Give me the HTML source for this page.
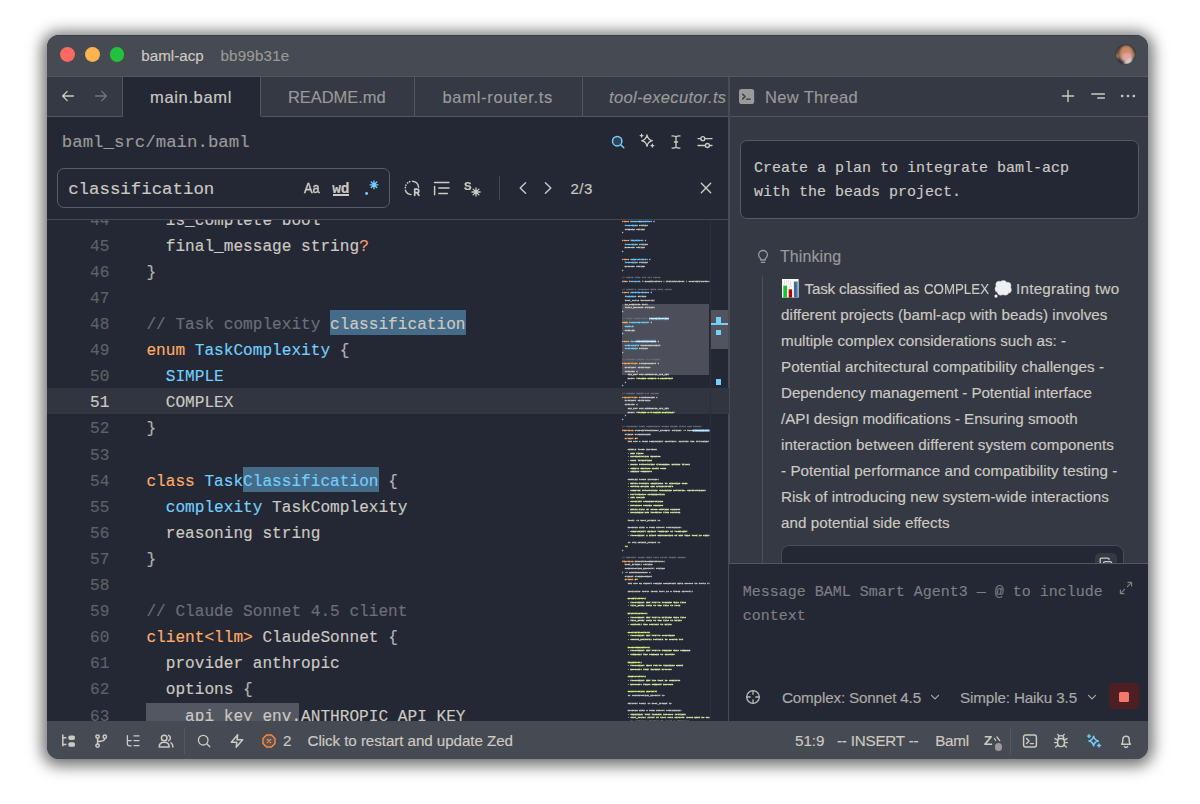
<!DOCTYPE html>
<html lang="en">
<head>
<meta charset="utf-8">
<title>baml-acp — main.baml</title>
<style>
html,body{margin:0;padding:0;background:#fff;}
body{width:1200px;height:804px;overflow:hidden;position:relative;font-family:"Liberation Sans",sans-serif;}
#shadow{position:absolute;left:46.5px;top:34.7px;width:1101.5px;height:724.5px;border-radius:12px;
  box-shadow:0 2px 15px 5px rgba(0,0,0,.56);}
#win{position:absolute;left:46.5px;top:34.7px;width:1101.5px;height:724.5px;border-radius:12px;overflow:hidden;background:#242835;}
#pg{position:absolute;left:-46.5px;top:-34.7px;width:1200px;height:804px;}
.b{position:absolute;}
.t{position:absolute;white-space:pre;line-height:20px;-webkit-text-stroke:.15px;}
.ic{position:absolute;overflow:visible;fill:none;stroke:#cccac2;stroke-width:1.3;stroke-linecap:round;stroke-linejoin:round;}
.mu{stroke:#9a9a98;}
.ac{stroke:#72cffe;}
.k{color:#ffad65}.ty{color:#72cffe}.cm{color:#6a6f79}.op{color:#f29e74}.pu{color:#b4b3ae}.s{color:#d4fe7f}.fn{color:#cccac2}.s2{color:#d9eba6}.hl{background:#4f86ad;color:#e8f4fb}
#mm{position:absolute;left:622px;top:220px;width:88px;height:501px;overflow:hidden;}
#mmi{position:absolute;left:0;top:0;transform-origin:0 0;transform:scale(.2368);font-family:"Liberation Mono",monospace;font-size:10px;line-height:15.75px;white-space:pre;color:#cccac2;font-weight:700;width:369px;overflow:hidden;-webkit-text-stroke:1.35px;}
</style>
</head>
<body>
<div id="shadow"></div>
<div id="win"><div id="pg">

<div class="b" style="left:46px;top:34px;width:1104px;height:43px;background:#464a52;"></div>
<div class="b" style="left:46px;top:35px;width:1104px;height:1px;background:#3a3e4a;"></div>
<div class="b" style="left:46px;top:76px;width:1104px;height:1px;background:#53565d;"></div>
<div class="b" style="left:46px;top:77px;width:1104px;height:39px;background:#353944;"></div>
<div class="b" style="left:46px;top:116px;width:1104px;height:1px;background:#53565d;"></div>
<div class="b" style="left:123px;top:77px;width:138px;height:40px;background:#242835;"></div>
<div class="b" style="left:122.2px;top:77px;width:1px;height:39px;background:#53565d;"></div>
<div class="b" style="left:260px;top:77px;width:1px;height:39px;background:#53565d;"></div>
<div class="b" style="left:414.3px;top:77px;width:1px;height:39px;background:#53565d;"></div>
<div class="b" style="left:581.5px;top:77px;width:1px;height:39px;background:#53565d;"></div>
<div class="b" style="left:729px;top:117px;width:421px;height:446px;background:#353944;"></div>
<div class="b" style="left:728.4px;top:77px;width:2px;height:644px;background:#474b56;"></div>
<div class="b" style="left:46px;top:219px;width:683px;height:1px;background:#454853;"></div>
<div class="b" style="left:46px;top:721px;width:1104px;height:40px;background:#464a52;"></div>
<div class="b" style="left:59.8px;top:47.1px;width:14.800px;height:14.800px;border-radius:50%;background:#fb6a62;"></div>
<div class="b" style="left:84.8px;top:47.1px;width:14.800px;height:14.800px;border-radius:50%;background:#fcb24f;"></div>
<div class="b" style="left:109.6px;top:47.1px;width:14.800px;height:14.800px;border-radius:50%;background:#23c23c;"></div>
<svg class="b" style="left:1114.6px;top:44.4px" width="21" height="21" viewBox="0 0 21 21"><defs><clipPath id="avc"><circle cx="10.500" cy="10.500" r="10.300"/></clipPath><filter id="avb" x="-30%" y="-30%" width="160%" height="160%"><feGaussianBlur stdDeviation="0.900"/></filter></defs><g clip-path="url(#avc)"><rect width="21" height="21" fill="#30343f"/><g filter="url(#avb)"><rect x="-1" y="4" width="7" height="11" fill="#46503f"/><path d="M3 5 8 1.500 15 1.800 19.500 6 19 8 3 8z" fill="#6e2a30"/><ellipse cx="11.400" cy="10" rx="6.900" ry="8.400" fill="#c98a64"/><ellipse cx="12.200" cy="13.400" rx="5.200" ry="4.400" fill="#e0a6a2"/><path d="M13 15.800 17.800 13.800 16.500 18.500 12 20.800 8.500 19.800z" fill="#d9d7cd"/><rect x="1.300" y="10.200" width="2" height="4" rx="1" fill="#c98556"/><rect x="18.800" y="8.500" width="1.500" height="5.500" rx=".7" fill="#d78d45"/><rect x="8.400" y="7.700" width="2" height="1" fill="#8d9aa3"/><rect x="13.800" y="7.100" width="1.900" height="1" fill="#8d9aa3"/></g></g><circle cx="10.500" cy="10.500" r="10.200" fill="none" stroke="#3b3e47" stroke-width=".9"/></svg>
<svg class="ic " style="left:60.30px;top:87.90px;stroke-width:1.300" width="16" height="16" viewBox="0 0 16 16"><path d="M13.400 8H2.800M7.200 3.400 2.600 8l4.600 4.600"/></svg>
<svg class="ic " style="left:92.80px;top:87.90px;stroke:#73757a;stroke-width:1.3" width="16" height="16" viewBox="0 0 16 16"><path d="M2.6 8h10.6M8.8 3.4 13.4 8l-4.6 4.6"/></svg>
<svg class="b" style="left:739.4px;top:88.9px" width="15.200" height="15.200" viewBox="0 0 15 15"><rect x="0" y="0" width="15" height="15" rx="2.6" fill="#9a9a98"/><path d="M3.6 5.2 6 7.5 3.6 9.8M7.4 10h3.6" fill="none" stroke="#353944" stroke-width="1.4" stroke-linecap="round" stroke-linejoin="round"/></svg>
<svg class="ic " style="left:1060.00px;top:88.40px;stroke-width:1.4" width="16" height="16" viewBox="0 0 16 16"><path d="M8 2.4v11.2M2.4 8h11.2"/></svg>
<svg class="ic " style="left:1090.00px;top:88.40px;stroke-width:1.5" width="16" height="16" viewBox="0 0 16 16"><path d="M1.8 6h12.6M7.8 10h6.6"/></svg>
<svg class="b" style="left:1119.6px;top:88.4px" width="16" height="16" viewBox="0 0 16 16"><circle cx="2.2" cy="8" r="1.35" fill="#cccac2"/><circle cx="8" cy="8" r="1.35" fill="#cccac2"/><circle cx="13.8" cy="8" r="1.35" fill="#cccac2"/></svg>
<svg class="ic ac" style="left:610.40px;top:133.50px;stroke-width:1.500" width="16" height="16" viewBox="0 0 16 16"><circle cx="7.200" cy="7.200" r="4.700" fill="rgba(114,207,254,.16)"/><path d="m10.700 10.700 3.100 3.100"/></svg>
<svg class="ic " style="left:639.40px;top:133.40px;stroke-width:1.250" width="16" height="16" viewBox="0 0 16 16"><path d="M8 1.800c.6 3.700 2 5.100 5.300 5.800-3.300.7-4.700 2.100-5.300 5.800-.6-3.700-2-5.100-5.300-5.800 3.300-.7 4.700-2.100 5.300-5.800Z"/><path d="M2.600 1.200v2.800M1.200 2.600h2.800M13.400 11.200v2.800M12 12.600h2.800"/></svg>
<svg class="ic " style="left:668.00px;top:133.60px;stroke-width:1.350" width="16" height="16" viewBox="0 0 16 16"><path d="M8 3.200v9.600M4 1.900c2.300 0 4 .3 4 1.600 0-1.300 1.700-1.600 4-1.600M4 14.100c2.300 0 4-.3 4-1.600 0 1.300 1.700 1.600 4 1.600M6.400 8h3.200"/></svg>
<svg class="ic " style="left:696.60px;top:133.70px;stroke-width:1.300" width="16" height="16" viewBox="0 0 16 16"><path d="M1 4.700h2.800M7.800 4.700H15M1 11.500h7.400M12.400 11.500H15"/><circle cx="5.800" cy="4.700" r="2"/><circle cx="10.400" cy="11.500" r="2"/></svg>
<div class="b" style="left:57px;top:168.3px;width:330.6px;height:37.4px;border:1px solid #5a5d65;border-radius:7px;box-sizing:content-box;"></div>
<div class="b" style="left:332.5px;top:194.2px;width:16.5px;height:1.4px;background:#cccac2;"></div>
<svg class="b" style="left:362px;top:179px" width="20" height="20" viewBox="0 0 20 20"><circle cx="4.600" cy="14.500" r="1.450" fill="#72cffe"/><g stroke="#72cffe" stroke-width="1.350" stroke-linecap="round"><path d="M12 1.900v7.800M8.100 5.800h7.800M9.250 3.050l5.500 5.500M14.750 3.050l-5.500 5.500"/></g></svg>
<svg class="ic " style="left:403.00px;top:178.60px;stroke-width:1.400" width="18" height="18" viewBox="0 0 18 18"><path d="M9.600 2.300a6.700 6.700 0 0 1 6 6M8 15.600a6.700 6.700 0 0 1-5.600-4.400"/><path d="M2.300 8.600a6.700 6.700 0 0 1 .7-2.600M4.600 3.900a6.700 6.700 0 0 1 2.600-1.400" stroke-dasharray="0.100 2.300" stroke-width="1.700"/><path d="M11.700 16.300v-6.200h2.300a1.800 1.800 0 0 1 0 3.600h-2.300m2.300 0 1.900 2.600" stroke-width="1.700"/></svg>
<svg class="ic " style="left:432.70px;top:179.00px;stroke-width:1.5" width="18" height="18" viewBox="0 0 18 18"><path d="M1.500 3.600h14.400M5.800 9h10.200M5.800 14.400h8.600M1.600 7.500v8.200"/></svg>
<svg class="b" style="left:469.7px;top:185.7px" width="12" height="12" viewBox="0 0 12 12"><g stroke="#cccac2" stroke-width="1.300" stroke-linecap="round"><path d="M6 1.900v8.200M1.900 6h8.200M3.100 3.100l5.800 5.800M8.900 3.100 3.100 8.900"/></g></svg>
<div class="b" style="left:499.3px;top:175.6px;width:1px;height:24.5px;background:#454853;"></div>
<svg class="ic " style="left:514.60px;top:180.00px;stroke-width:1.400" width="16" height="16" viewBox="0 0 16 16"><path d="M10.600 2.800 5.200 8l5.400 5.200"/></svg>
<svg class="ic " style="left:540.00px;top:180.00px;stroke-width:1.400" width="16" height="16" viewBox="0 0 16 16"><path d="M5.400 2.800 10.800 8l-5.400 5.200"/></svg>
<svg class="ic " style="left:698.00px;top:180.00px;stroke-width:1.400" width="16" height="16" viewBox="0 0 16 16"><path d="M3.300 3.300l9.400 9.400M12.700 3.300 3.300 12.700"/></svg>
<div class="b" style="left:46px;top:220px;width:683px;height:501px;overflow:hidden;"><div class="b" style="left:-46px;top:-220px;width:1200px;height:804px;">
<div class="b" style="left:46px;top:388.2px;width:683px;height:26.1px;background:#313540;"></div>
<div class="b" style="left:330.32px;top:309.9px;width:135.51999999999998px;height:25.6px;background:#446b88;"></div>
<div class="b" style="left:243.2px;top:466.5px;width:135.51999999999998px;height:25.6px;background:#446b88;"></div>
<div class="b" style="left:146.2px;top:702.5px;width:153px;height:20px;background:#535761;"></div>
</div></div>
<div class="b" style="left:47px;top:220px;width:575px;height:501px;overflow:hidden;"><div class="b" style="left:-47px;top:-220px;width:1200px;height:804px;">
<span class="t" style="left:90.00px;top:210.60px;font-family:'Liberation Mono', monospace;font-size:16.13px;color:#5f6167;width:19.36px;text-align:right;letter-spacing:0.002px">44</span>
<span class="t" style="left:146.40px;top:210.60px;font-family:'Liberation Mono', monospace;font-size:16.13px;letter-spacing:0.002px;color:#cccac2">  is_complete bool</span>
<span class="t" style="left:90.00px;top:236.70px;font-family:'Liberation Mono', monospace;font-size:16.13px;color:#5f6167;width:19.36px;text-align:right;letter-spacing:0.002px">45</span>
<span class="t" style="left:146.40px;top:236.70px;font-family:'Liberation Mono', monospace;font-size:16.13px;letter-spacing:0.002px;color:#cccac2">  final_message string<span class="op">?</span></span>
<span class="t" style="left:90.00px;top:262.80px;font-family:'Liberation Mono', monospace;font-size:16.13px;color:#5f6167;width:19.36px;text-align:right;letter-spacing:0.002px">46</span>
<span class="t" style="left:146.40px;top:262.80px;font-family:'Liberation Mono', monospace;font-size:16.13px;letter-spacing:0.002px;color:#cccac2"><span class="pu">}</span></span>
<span class="t" style="left:90.00px;top:288.90px;font-family:'Liberation Mono', monospace;font-size:16.13px;color:#5f6167;width:19.36px;text-align:right;letter-spacing:0.002px">47</span>
<span class="t" style="left:90.00px;top:315.00px;font-family:'Liberation Mono', monospace;font-size:16.13px;color:#5f6167;width:19.36px;text-align:right;letter-spacing:0.002px">48</span>
<span class="t" style="left:146.40px;top:315.00px;font-family:'Liberation Mono', monospace;font-size:16.13px;letter-spacing:0.002px;color:#cccac2"><span class="cm">// Task complexity </span>classification</span>
<span class="t" style="left:90.00px;top:341.10px;font-family:'Liberation Mono', monospace;font-size:16.13px;color:#5f6167;width:19.36px;text-align:right;letter-spacing:0.002px">49</span>
<span class="t" style="left:146.40px;top:341.10px;font-family:'Liberation Mono', monospace;font-size:16.13px;letter-spacing:0.002px;color:#cccac2"><span class="k">enum</span> <span class="ty">TaskComplexity</span> <span class="pu">{</span></span>
<span class="t" style="left:90.00px;top:367.20px;font-family:'Liberation Mono', monospace;font-size:16.13px;color:#5f6167;width:19.36px;text-align:right;letter-spacing:0.002px">50</span>
<span class="t" style="left:146.40px;top:367.20px;font-family:'Liberation Mono', monospace;font-size:16.13px;letter-spacing:0.002px;color:#cccac2">  <span class="ty">SIMPLE</span></span>
<span class="t" style="left:90.00px;top:393.30px;font-family:'Liberation Mono', monospace;font-size:16.13px;color:#cccac2;width:19.36px;text-align:right;letter-spacing:0.002px">51</span>
<span class="t" style="left:146.40px;top:393.30px;font-family:'Liberation Mono', monospace;font-size:16.13px;letter-spacing:0.002px;color:#cccac2">  COMPLEX</span>
<span class="t" style="left:90.00px;top:419.40px;font-family:'Liberation Mono', monospace;font-size:16.13px;color:#5f6167;width:19.36px;text-align:right;letter-spacing:0.002px">52</span>
<span class="t" style="left:146.40px;top:419.40px;font-family:'Liberation Mono', monospace;font-size:16.13px;letter-spacing:0.002px;color:#cccac2"><span class="pu">}</span></span>
<span class="t" style="left:90.00px;top:445.50px;font-family:'Liberation Mono', monospace;font-size:16.13px;color:#5f6167;width:19.36px;text-align:right;letter-spacing:0.002px">53</span>
<span class="t" style="left:90.00px;top:471.60px;font-family:'Liberation Mono', monospace;font-size:16.13px;color:#5f6167;width:19.36px;text-align:right;letter-spacing:0.002px">54</span>
<span class="t" style="left:146.40px;top:471.60px;font-family:'Liberation Mono', monospace;font-size:16.13px;letter-spacing:0.002px;color:#cccac2"><span class="k">class</span> <span class="ty">TaskClassification</span> <span class="pu">{</span></span>
<span class="t" style="left:90.00px;top:497.70px;font-family:'Liberation Mono', monospace;font-size:16.13px;color:#5f6167;width:19.36px;text-align:right;letter-spacing:0.002px">55</span>
<span class="t" style="left:146.40px;top:497.70px;font-family:'Liberation Mono', monospace;font-size:16.13px;letter-spacing:0.002px;color:#cccac2">  <span class="ty">complexity</span> TaskComplexity</span>
<span class="t" style="left:90.00px;top:523.80px;font-family:'Liberation Mono', monospace;font-size:16.13px;color:#5f6167;width:19.36px;text-align:right;letter-spacing:0.002px">56</span>
<span class="t" style="left:146.40px;top:523.80px;font-family:'Liberation Mono', monospace;font-size:16.13px;letter-spacing:0.002px;color:#cccac2">  reasoning string</span>
<span class="t" style="left:90.00px;top:549.90px;font-family:'Liberation Mono', monospace;font-size:16.13px;color:#5f6167;width:19.36px;text-align:right;letter-spacing:0.002px">57</span>
<span class="t" style="left:146.40px;top:549.90px;font-family:'Liberation Mono', monospace;font-size:16.13px;letter-spacing:0.002px;color:#cccac2"><span class="pu">}</span></span>
<span class="t" style="left:90.00px;top:576.00px;font-family:'Liberation Mono', monospace;font-size:16.13px;color:#5f6167;width:19.36px;text-align:right;letter-spacing:0.002px">58</span>
<span class="t" style="left:90.00px;top:602.10px;font-family:'Liberation Mono', monospace;font-size:16.13px;color:#5f6167;width:19.36px;text-align:right;letter-spacing:0.002px">59</span>
<span class="t" style="left:146.40px;top:602.10px;font-family:'Liberation Mono', monospace;font-size:16.13px;letter-spacing:0.002px;color:#cccac2"><span class="cm">// Claude Sonnet 4.5 client</span></span>
<span class="t" style="left:90.00px;top:628.20px;font-family:'Liberation Mono', monospace;font-size:16.13px;color:#5f6167;width:19.36px;text-align:right;letter-spacing:0.002px">60</span>
<span class="t" style="left:146.40px;top:628.20px;font-family:'Liberation Mono', monospace;font-size:16.13px;letter-spacing:0.002px;color:#cccac2"><span class="k">client&lt;llm&gt;</span> ClaudeSonnet <span class="pu">{</span></span>
<span class="t" style="left:90.00px;top:654.30px;font-family:'Liberation Mono', monospace;font-size:16.13px;color:#5f6167;width:19.36px;text-align:right;letter-spacing:0.002px">61</span>
<span class="t" style="left:146.40px;top:654.30px;font-family:'Liberation Mono', monospace;font-size:16.13px;letter-spacing:0.002px;color:#cccac2">  provider anthropic</span>
<span class="t" style="left:90.00px;top:680.40px;font-family:'Liberation Mono', monospace;font-size:16.13px;color:#5f6167;width:19.36px;text-align:right;letter-spacing:0.002px">62</span>
<span class="t" style="left:146.40px;top:680.40px;font-family:'Liberation Mono', monospace;font-size:16.13px;letter-spacing:0.002px;color:#cccac2">  options <span class="pu">{</span></span>
<span class="t" style="left:90.00px;top:706.50px;font-family:'Liberation Mono', monospace;font-size:16.13px;color:#5f6167;width:19.36px;text-align:right;letter-spacing:0.002px">63</span>
<span class="t" style="left:146.40px;top:706.50px;font-family:'Liberation Mono', monospace;font-size:16.13px;letter-spacing:0.002px;color:#cccac2">    api_key env.ANTHROPIC_API_KEY</span>
</div></div>
<div id="mm">
<div class="b" style="left:0px;top:83.7px;width:87.4px;height:70.9px;background:#50535c;opacity:.92"></div>
<div id="mmi" style="top:0.1px"><span class="k">class</span> <span class="ty">BashCommandTool</span> {
  <span class="ty">reasoning</span> string
  command string
}

<span class="k">class</span> <span class="ty">ThinkTool</span> {
  <span class="ty">reasoning</span> string
  message string
}

<span class="k">class</span> <span class="ty">CompleteTool</span> {
  <span class="ty">reasoning</span> string
  message string
}

<span class="cm">// Union type for all tools</span>
<span class="k">type</span> <span class="ty">ToolCall</span> <span class="op">=</span> ReadFileTool <span class="op">|</span> WriteFileTool <span class="op">|</span> SearchFilesTool <span class="op">|</span> BashCommandTool <span class="op">|</span> ThinkTool

<span class="cm">// Agent&#x27;s response with tool calls</span>
<span class="k">class</span> <span class="ty">AgentResponse</span> {
  <span class="ty">thinking</span> string
  tool_calls ToolCall[]
  is_complete bool
  final_message string?
}

<span class="cm">// Task complexity <span class="hl">classification</span></span>
<span class="k">enum</span> <span class="ty">TaskComplexity</span> {
  <span class="ty">SIMPLE</span>
  COMPLEX
}

<span class="k">class</span> <span class="ty">Task<span class="hl">Classification</span></span> {
  <span class="ty">complexity</span> TaskComplexity
  <span class="ty">reasoning</span> string
}

<span class="cm">// Claude Sonnet 4.5 client</span>
<span class="k">client&lt;llm&gt;</span> ClaudeSonnet {
  provider anthropic
  options {
    api_key env.ANTHROPIC_API_KEY
    model <span class="s">&quot;claude-sonnet-4-20250514&quot;</span>
  }
}

<span class="cm">// Claude Haiku 3.5 client</span>
<span class="k">client&lt;llm&gt;</span> ClaudeHaiku {
  provider anthropic
  options {
    api_key env.ANTHROPIC_API_KEY
    model <span class="s">&quot;claude-3-5-haiku-20241022&quot;</span>
  }
}

<span class="cm">// Classify task complexity using Haiku (fast and cheap)</span>
<span class="k">function</span> <span class="fn">ClassifyTask(user_prompt:</span> string) -&gt; Task<span class="hl">Classification</span> {
  client ClaudeHaiku
  <span class="k">prompt</span> <span class="s">#&quot;</span>
    You are a task complexity analyzer. Analyze the following user request

    SIMPLE tasks include:
<span class="s2">    - Bug fixes</span>
<span class="s2">    - Documentation updates</span>
<span class="s2">    - Code formatting</span>
<span class="s2">    - Basic refactoring (renaming, moving files)</span>
<span class="s2">    - Simple queries about code</span>
<span class="s2">    - Adding comments</span>

    COMPLEX tasks include:
<span class="s2">    - Multi-feature additions to existing code</span>
<span class="s2">    - System design and architecture</span>
<span class="s2">    - Complex refactoring (changing patterns, abstractions)</span>
<span class="s2">    - Performance optimization</span>
<span class="s2">    - API design</span>
<span class="s2">    - Security considerations</span>
<span class="s2">    - Database schema changes</span>
<span class="s2">    - Multi-file or cross-cutting changes</span>
<span class="s2">    - Designing new features from scratch</span>

    Task: {{ user_prompt }}

    Respond with a JSON object containing:
<span class="s2">    - complexity: Either &quot;SIMPLE&quot; or &quot;COMPLEX&quot;</span>
<span class="s2">    - reasoning: A brief explanation of why this task is simple or complex</span>

    {{ ctx.output_format }}
<span class="s">  &quot;#</span>
}

<span class="cm">// Execute tasks with tool calls using Sonnet</span>
<span class="k">function</span> <span class="fn">ExecuteTaskWithTools(</span>
  user_prompt: string,
  conversation_history: string
) -&gt; AgentResponse {
  client ClaudeSonnet
  <span class="k">prompt</span> <span class="s">#&quot;</span>
    You are an expert coding assistant with access to tools for working

    Available tools (each tool is a typed object):

<span class="s">    ReadFileTool:</span>
<span class="s2">    - reasoning: Why you&#x27;re reading this file</span>
<span class="s2">    - file_path: Path to the file to read</span>

<span class="s">    WriteFileTool:</span>
<span class="s2">    - reasoning: Why you&#x27;re writing this file</span>
<span class="s2">    - file_path: Path to the file to write</span>
<span class="s2">    - content: The content to write</span>

<span class="s">    SearchFilesTool:</span>
<span class="s2">    - reasoning: Why you&#x27;re searching</span>
<span class="s2">    - search_pattern: Pattern to search for</span>

<span class="s">    BashCommandTool:</span>
<span class="s2">    - reasoning: Why you&#x27;re running this command</span>
<span class="s2">    - command: The command to execute</span>

<span class="s">    ThinkTool:</span>
<span class="s2">    - reasoning: What you&#x27;re thinking about</span>
<span class="s2">    - message: Your thought process</span>

<span class="s">    CompleteTool:</span>
<span class="s2">    - reasoning: Why the task is complete</span>
<span class="s2">    - message: Final summary message</span>

<span class="s">    Conversation history:</span>
    {{ conversation_history }}

    Current task: {{ user_prompt }}

    Respond with a JSON object containing:
<span class="s2">    - thinking: Your thought process (string)</span>
<span class="s2">    - tool_calls: Array of tool call objects (each must be one of the types</span>
<span class="s2">    - is_complete: Whether the task is finished</span>
</div>
</div>
<div class="b" style="left:709.5px;top:220px;width:1px;height:501px;background:#2b2f3b;"></div>
<div class="b" style="left:710.5px;top:310px;width:17.8px;height:38.7px;background:#51545d;"></div>
<div class="b" style="left:715.9px;top:317.1px;width:5.2px;height:6.3px;background:#72cffe;"></div>
<div class="b" style="left:710.5px;top:323.1px;width:17.8px;height:2.4px;background:#72cffe;"></div>
<div class="b" style="left:715.9px;top:329.6px;width:5.2px;height:5.8px;background:#72cffe;"></div>
<div class="b" style="left:715.9px;top:379px;width:5.2px;height:6.2px;background:#72cffe;"></div>
<div class="b" style="left:740px;top:140px;width:396.5px;height:77px;border:1px solid #565962;border-radius:7px;background:#242835;box-sizing:content-box;"></div>
<svg class="ic mu" style="left:755.00px;top:248.40px;stroke-width:1.300" width="16" height="16" viewBox="0 0 16 16"><path d="M5.700 10.600c-1.300-.9-2.100-2.100-2.100-3.700a4.400 4.400 0 0 1 8.800 0c0 1.600-.8 2.800-2.100 3.700v1.400H5.700z"/><path d="M6.300 14.300h3.400"/></svg>
<div class="b" style="left:762px;top:276px;width:1px;height:287px;background:#4b4e59;"></div>
<svg class="b" style="left:782.2px;top:279.4px" width="16.600" height="18.600" viewBox="0 0 16.600 18.600"><rect x="0" y="0" width="16.600" height="18.600" fill="#fdfdfd"/><g fill="#cbbd9f"><rect x="2" y="1.700" width=".9" height=".9"/><rect x="4" y="1.700" width=".9" height=".9"/><rect x="6" y="1.700" width=".9" height=".9"/><rect x="8" y="1.700" width=".9" height=".9"/><rect x="2" y="3.700" width=".9" height=".9"/><rect x="4" y="3.700" width=".9" height=".9"/><rect x="6" y="4.600" width=".9" height=".9"/><rect x="8" y="3.700" width=".9" height=".9"/><rect x="8" y="5.600" width=".9" height=".9"/><rect x="9" y="6.800" width=".9" height=".9"/><rect x="7" y="7.600" width=".9" height=".9"/></g><rect x="1.300" y="6.600" width="3.800" height="12" fill="#1fc12f"/><rect x="6.700" y="10.300" width="3.400" height="8.300" fill="#b20303"/><rect x="11.900" y="2.600" width="4" height="16" fill="#456b8c"/><rect x="14.800" y="2.600" width="1.100" height="16" fill="#62a9dd"/></svg>
<svg class="b" style="left:993.5px;top:279.5px" width="18" height="18" viewBox="0 0 18 18"><g fill="#eef1f4" stroke="#d9d3c4" stroke-width=".5"><circle cx="5.200" cy="4.600" r="3.400"/><circle cx="9.400" cy="3.800" r="3.400"/><circle cx="13.600" cy="5.600" r="3.400"/><circle cx="4.400" cy="9" r="3.400"/><circle cx="14" cy="9.800" r="3.400"/><circle cx="6.800" cy="11.800" r="3.400"/><circle cx="11.200" cy="11.800" r="3.400"/></g><ellipse cx="9.200" cy="7.800" rx="6.400" ry="5.600" fill="#eef1f4"/><circle cx="2" cy="16.100" r="1.550" fill="#f1f0ea"/></svg>
<div class="b" style="left:781px;top:545px;width:340.6px;height:40px;border:1px solid #494d58;border-radius:8px;background:#242835;box-sizing:content-box;"></div>
<div class="b" style="left:1094.5px;top:552.5px;width:22px;height:22px;border-radius:5px;background:#353944;"></div>
<svg class="ic " style="left:1098.50px;top:556.50px;stroke-width:1.300" width="14" height="14" viewBox="0 0 14 14"><rect x="4.600" y="4.600" width="8" height="8" rx="1.500"/><path d="M10 2.600V2.400A1.200 1.200 0 0 0 8.800 1.200H2.400A1.200 1.200 0 0 0 1.200 2.400v6.400A1.200 1.200 0 0 0 2.400 10h.2"/></svg>
<div class="b" style="left:729.2px;top:563px;width:421px;height:1px;background:#53565d;"></div>
<div class="b" style="left:729.2px;top:564px;width:421px;height:157px;background:#242835;"></div>
<svg class="ic mu" style="left:1118.50px;top:580.60px;stroke-width:1.200;stroke:#7d7f82" width="14" height="14" viewBox="0 0 14 14"><path d="M8.400 5.600 12.600 1.400M9 1.400h3.600v3.600M5.600 8.400 1.400 12.600M5 12.600H1.400V9"/></svg>
<svg class="ic " style="left:745.30px;top:688.90px;stroke-width:1.300;stroke:#b9b8b2" width="16" height="16" viewBox="0 0 16 16"><circle cx="8" cy="8" r="6.300"/><path d="M8 1.700v3.500M8 10.800v3.500M1.700 8h3.500M10.800 8h3.500"/></svg>
<svg class="ic " style="left:929.00px;top:691.40px;stroke-width:1.200;stroke:#aaaaa5" width="12" height="12" viewBox="0 0 12 12"><path d="M2.500 4.300 6 7.800l3.500-3.500"/></svg>
<svg class="ic " style="left:1086.00px;top:691.40px;stroke-width:1.200;stroke:#aaaaa5" width="12" height="12" viewBox="0 0 12 12"><path d="M2.500 4.300 6 7.800l3.500-3.500"/></svg>
<div class="b" style="left:1109.3px;top:683.3px;width:29.300px;height:26px;border-radius:5px;background:#4d1f23;"></div>
<div class="b" style="left:1119px;top:691.6px;width:10px;height:10px;background:#f4796b;border-radius:1.500px"></div>
<svg class="b" style="left:60px;top:732.8px" width="16" height="16" viewBox="0 0 16 16"><path d="M2.800 1.600v11.600M2.800 4.700h3.600M2.800 11.500h3.600" fill="none" stroke="#cccac2" stroke-width="1.500" stroke-linecap="butt" stroke-linejoin="round"/><rect x="8.300" y="2.400" width="6.700" height="4.600" rx="1.900" fill="#cccac2"/><rect x="8.300" y="9.200" width="6.700" height="4.600" rx="1.900" fill="#cccac2"/></svg>
<svg class="ic " style="left:92.80px;top:732.80px;stroke-width:1.500" width="16" height="16" viewBox="0 0 16 16"><circle cx="4.600" cy="3.600" r="1.700"/><circle cx="4.600" cy="12.600" r="1.700"/><circle cx="11.800" cy="3.800" r="1.700"/><path d="M4.600 5.300v5.600M11.800 5.500c0 2.500-3 3-7.200 3"/></svg>
<svg class="ic " style="left:125.30px;top:732.80px;stroke-width:1.300" width="16" height="16" viewBox="0 0 16 16"><path d="M2.400 2.600v8.200a2 2 0 0 0 2 2h1.800M2.400 7.600h3.800M9 2.800h5M9 7.600h5M9 12.600h5"/></svg>
<svg class="ic " style="left:157.80px;top:732.80px;stroke-width:1.500" width="16" height="16" viewBox="0 0 16 16"><circle cx="6.200" cy="5" r="2.800"/><path d="M1.200 14c0-3 2-4.800 5-4.800s5 1.800 5 4.800zM10.600 2.400a2.800 2.800 0 0 1 0 5.200M13 9.800c1.300.8 1.900 2.200 1.900 4.200"/></svg>
<div class="b" style="left:184.3px;top:727.5px;width:1px;height:26.5px;background:#555861;"></div>
<svg class="ic " style="left:195.80px;top:732.80px;stroke-width:1.300" width="16" height="16" viewBox="0 0 16 16"><circle cx="7.200" cy="7.200" r="4.800"/><path d="m10.800 10.800 3 3"/></svg>
<svg class="ic " style="left:228.50px;top:732.80px;stroke-width:1.500" width="16" height="16" viewBox="0 0 16 16"><path d="M8.700 1.700 2.300 9.300h5.500l-.6 5 6.500-7.600H8.100z"/></svg>
<svg class="ic " style="left:260.80px;top:732.80px;stroke:#f58c46;stroke-width:1.400" width="16" height="16" viewBox="0 0 16 16"><path d="M5.500 2h5l3.500 3.500v5L10.500 14h-5L2 10.500v-5z" fill="rgba(245,140,70,.13)"/><path d="M6.400 6.400l3.200 3.200M9.600 6.400 6.400 9.600"/></svg>
<svg class="ic" style="left:990px;top:733px;stroke-width:1.200" width="14" height="10" viewBox="0 0 14 10"><path d="M4.400 5.500l1.300 1.900M6.900 4l2.900 3.600"/></svg>
<div class="b" style="left:994.5px;top:743.2px;width:7.600px;height:7.600px;border-radius:50%;background:#9a9a98;"></div>
<div class="b" style="left:1010px;top:727.5px;width:1px;height:26.5px;background:#555861;"></div>
<svg class="ic " style="left:1021.50px;top:732.80px;stroke-width:1.450" width="16" height="16" viewBox="0 0 16 16"><rect x="1.600" y="2" width="12.800" height="12" rx="2"/><path d="M4.600 5.600 7 8l-2.400 2.400M8.400 10.600h3"/></svg>
<svg class="ic " style="left:1053.20px;top:732.80px;stroke-width:1.450" width="16" height="16" viewBox="0 0 16 16"><path d="M5.200 5.400c0-1.700 1.200-2.800 2.800-2.800s2.800 1.100 2.800 2.800M4.600 8.200c0-1.600 1-2.800 3.400-2.800s3.400 1.200 3.400 2.800v1.600c0 2.200-1.400 3.800-3.400 3.800s-3.400-1.600-3.400-3.800zM4.600 7.200 2 5.600M11.400 7.200 14 5.600M4.600 9.600H1.600M11.400 9.600h3M5 12l-2.400 2M11 12l2.400 2M5.800 2.600 4.800 1.400M10.200 2.600l1-1.200"/></svg>
<svg class="ic ac" style="left:1086.00px;top:732.80px;stroke-width:1.450" width="16" height="16" viewBox="0 0 16 16"><path d="M7.600 3.200c.5 3 1.700 4.200 4.700 4.800-3 .6-4.200 1.800-4.700 4.800-.5-3-1.700-4.200-4.700-4.800 3-.6 4.200-1.800 4.700-4.800Z"/><path d="M3 1.600v3M1.500 3.100h3M13 11v3M11.500 12.500h3"/></svg>
<svg class="ic " style="left:1118.00px;top:732.80px;stroke-width:1.450" width="16" height="16" viewBox="0 0 16 16"><path d="M3.600 11.200c.9-.9 1.200-2 1.200-3.400V6.400a3.200 3.200 0 0 1 6.400 0v1.400c0 1.400.3 2.500 1.200 3.400zM6.400 13.600c.3.500.9.800 1.600.800s1.300-.3 1.600-.8"/></svg>
<span class="t" style="left:141.30px;top:45.53px;font-family:'Liberation Sans', sans-serif;font-size:15.2px;color:#cccac2;">baml-acp</span>
<span class="t" style="left:220.50px;top:45.53px;font-family:'Liberation Sans', sans-serif;font-size:15.2px;color:#9a9a98;letter-spacing:0.178px;">bb99b31e</span>
<span class="t" style="left:150.00px;top:86.78px;font-family:'Liberation Sans', sans-serif;font-size:16.5px;color:#cccac2;letter-spacing:0.653px;">main.baml</span>
<span class="t" style="left:288.00px;top:86.78px;font-family:'Liberation Sans', sans-serif;font-size:16.5px;color:#9a9a98;letter-spacing:-0.068px;">README.md</span>
<span class="t" style="left:442.50px;top:86.78px;font-family:'Liberation Sans', sans-serif;font-size:16.5px;color:#9a9a98;letter-spacing:0.688px;">baml-router.ts</span>
<span class="t" style="left:609.00px;top:86.78px;font-family:'Liberation Sans', sans-serif;font-size:16.5px;color:#9a9a98;font-style:italic;letter-spacing:0.325px;">tool-executor.ts</span>
<span class="t" style="left:765.00px;top:86.78px;font-family:'Liberation Sans', sans-serif;font-size:16.5px;color:#9a9a98;letter-spacing:0.342px;">New Thread</span>
<span class="t" style="left:61.80px;top:132.86px;font-family:'Liberation Mono', monospace;font-size:17.4px;color:#9a9a98;">baml_src/main.baml</span>
<span class="t" style="left:68.20px;top:179.86px;font-family:'Liberation Mono', monospace;font-size:17.4px;color:#cccac2;">classification</span>
<span class="t" style="left:303.60px;top:178.20px;font-family:'Liberation Sans', sans-serif;font-size:15px;color:#cccac2;transform:scaleX(0.8606);transform-origin:0 50%;-webkit-text-stroke:.45px;">Aa</span>
<span class="t" style="left:332.30px;top:178.73px;font-family:'Liberation Mono', monospace;font-size:14.5px;color:#cccac2;font-weight:700;letter-spacing:-0.253px;">wd</span>
<span class="t" style="left:464.20px;top:175.69px;font-family:'Liberation Sans', sans-serif;font-size:11px;color:#cccac2;font-weight:700;transform:scaleX(1.0349);transform-origin:0 50%;">S</span>
<span class="t" style="left:570.40px;top:178.80px;font-family:'Liberation Sans', sans-serif;font-size:15px;color:#cccac2;letter-spacing:0.580px;">2/3</span>
<span class="t" style="left:754.00px;top:159.00px;font-family:'Liberation Mono', monospace;font-size:15px;color:#cccac2;">Create a plan to integrate baml-acp</span>
<span class="t" style="left:754.00px;top:182.90px;font-family:'Liberation Mono', monospace;font-size:15px;color:#cccac2;">with the beads project.</span>
<span class="t" style="left:780.00px;top:246.96px;font-family:'Liberation Sans', sans-serif;font-size:16px;color:#9a9a98;letter-spacing:0.089px;">Thinking</span>
<span class="t" style="left:804.50px;top:279.23px;font-family:'Liberation Sans', sans-serif;font-size:15.2px;color:#cccac2;letter-spacing:-0.193px;">Task classified as</span>
<span class="t" style="left:1016.00px;top:279.23px;font-family:'Liberation Sans', sans-serif;font-size:15.2px;color:#cccac2;letter-spacing:0.252px;">Integrating two</span>
<span class="t" style="left:781.00px;top:305.23px;font-family:'Liberation Sans', sans-serif;font-size:15.2px;color:#cccac2;letter-spacing:0.036px;">different projects (baml-acp with beads) involves</span>
<span class="t" style="left:781.00px;top:331.23px;font-family:'Liberation Sans', sans-serif;font-size:15.2px;color:#cccac2;letter-spacing:-0.008px;">multiple complex considerations such as: -</span>
<span class="t" style="left:781.00px;top:357.23px;font-family:'Liberation Sans', sans-serif;font-size:15.2px;color:#cccac2;letter-spacing:0.065px;">Potential architectural compatibility challenges -</span>
<span class="t" style="left:781.00px;top:383.23px;font-family:'Liberation Sans', sans-serif;font-size:15.2px;color:#cccac2;letter-spacing:-0.052px;">Dependency management - Potential interface</span>
<span class="t" style="left:781.00px;top:409.23px;font-family:'Liberation Sans', sans-serif;font-size:15.2px;color:#cccac2;letter-spacing:-0.033px;">/API design modifications - Ensuring smooth</span>
<span class="t" style="left:781.00px;top:435.23px;font-family:'Liberation Sans', sans-serif;font-size:15.2px;color:#cccac2;letter-spacing:0.068px;">interaction between different system components</span>
<span class="t" style="left:781.00px;top:461.23px;font-family:'Liberation Sans', sans-serif;font-size:15.2px;color:#cccac2;letter-spacing:0.058px;">- Potential performance and compatibility testing -</span>
<span class="t" style="left:781.00px;top:487.23px;font-family:'Liberation Sans', sans-serif;font-size:15.2px;color:#cccac2;letter-spacing:0.006px;">Risk of introducing new system-wide interactions</span>
<span class="t" style="left:781.00px;top:513.23px;font-family:'Liberation Sans', sans-serif;font-size:15.2px;color:#cccac2;letter-spacing:0.033px;">and potential side effects</span>
<span class="t" style="left:923.80px;top:279.23px;font-family:'Liberation Sans', sans-serif;font-size:15.2px;color:#cccac2;transform:scaleX(0.8751);transform-origin:0 50%;">COMPLEX</span>
<span class="t" style="left:742.80px;top:583.10px;font-family:'Liberation Mono', monospace;font-size:15px;color:#7d7f82;">Message BAML Smart Agent3 — @ to include</span>
<span class="t" style="left:742.80px;top:606.50px;font-family:'Liberation Mono', monospace;font-size:15px;color:#7d7f82;">context</span>
<span class="t" style="left:782.00px;top:688.03px;font-family:'Liberation Sans', sans-serif;font-size:15.2px;color:#aaaaa5;letter-spacing:-0.150px;">Complex: Sonnet 4.5</span>
<span class="t" style="left:960.00px;top:688.03px;font-family:'Liberation Sans', sans-serif;font-size:15.2px;color:#aaaaa5;letter-spacing:-0.119px;">Simple: Haiku 3.5</span>
<span class="t" style="left:283.00px;top:731.43px;font-family:'Liberation Sans', sans-serif;font-size:15.2px;color:#cccac2;letter-spacing:-0.453px;">2</span>
<span class="t" style="left:307.50px;top:731.43px;font-family:'Liberation Sans', sans-serif;font-size:15.2px;color:#cccac2;letter-spacing:-0.070px;">Click to restart and update Zed</span>
<span class="t" style="left:795.00px;top:731.43px;font-family:'Liberation Sans', sans-serif;font-size:15.2px;color:#cccac2;letter-spacing:-0.066px;">51:9</span>
<span class="t" style="left:837.00px;top:731.43px;font-family:'Liberation Sans', sans-serif;font-size:15.2px;color:#cccac2;letter-spacing:-0.202px;">-- INSERT --</span>
<span class="t" style="left:935.20px;top:731.43px;font-family:'Liberation Sans', sans-serif;font-size:15.2px;color:#cccac2;letter-spacing:-0.202px;">Baml</span>
<span class="t" style="left:984.00px;top:730.81px;font-family:'Liberation Sans', sans-serif;font-size:12.1px;color:#cccac2;font-weight:700;transform:scaleX(1.1366);transform-origin:0 50%;">Z</span>
</div></div>
</body>
</html>
